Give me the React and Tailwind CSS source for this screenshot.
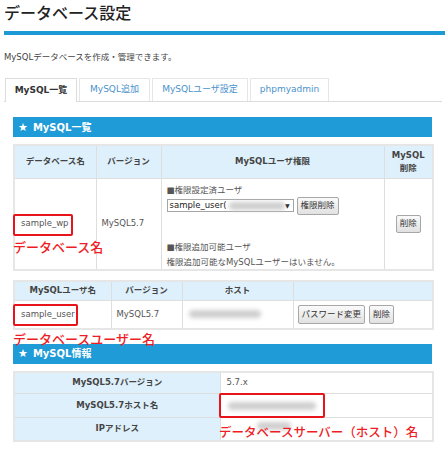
const JP = "font-['Noto_Sans_CJK_JP',sans-serif]";

function Blur({ w, className = "" }) {
  return <div className={`h-[8px] rounded-full bg-[#cfcfcf] blur-[2px] ${className}`} style={{ width: w }} />;
}

function Btn({ children, className = "" }) {
  return (
    <div
      className={`flex h-[18px] items-center rounded-[2px] border border-[#a7a7a7] bg-gradient-to-b from-[#fafafa] to-[#e1e1e1] px-[3px] text-[8.5px] leading-none text-[#333] ${className}`}
    >
      {children}
    </div>
  );
}

function SectionHead({ children }) {
  return (
    <div className="flex h-[20px] items-center gap-[5px] bg-[#1f9bd7] pl-[5px] text-[10px] font-bold text-white">
      <span className="text-[11px] leading-none">★</span>
      <span>{children}</span>
    </div>
  );
}

const th = "border border-[#dedede] bg-[#def0fb] text-center align-middle font-bold text-[8.5px] text-[#444] leading-[13px]";
const td = "border border-[#dedede] bg-white align-middle text-[8.5px] text-[#555] leading-[13px]";

export default function App() {
  return (
    <div className="relative h-[451px] w-[445px] overflow-hidden bg-white font-['DejaVu_Sans','Noto_Sans_CJK_JP',sans-serif] text-[#555]">
      <div className="pl-[4px]">
        <h1 className={`h-[24px] text-[16px] font-medium leading-[24px] text-[#222] ${JP}`}>データベース設定</h1>
        <div className="mt-[7px] h-[4px] bg-[#1d9ad6]" />
        <p className="mt-[15px] h-[14px] text-[8.5px] leading-[14px] text-[#444]">MySQLデータベースを作成・管理できます。</p>
        <div className="mr-[3px] mt-[14px] flex h-[24px] items-end gap-[2px] border-b border-[#dcdcdc] pl-[1px]">
          <div className="-mb-px flex h-[24px] w-[72px] items-center justify-center border border-b-0 border-[#dcdcdc] bg-white text-[9px] font-bold text-[#333]">
            MySQL一覧
          </div>
          <div className="flex h-[23px] w-[71px] items-center justify-center border border-b-0 border-[#e6e6e6] bg-white text-[9px] text-[#4a92cc]">
            MySQL追加
          </div>
          <div className="flex h-[23px] w-[96px] items-center justify-center border border-b-0 border-[#e6e6e6] bg-white text-[9px] text-[#4a92cc]">
            MySQLユーザ設定
          </div>
          <div className="flex h-[23px] w-[79px] items-center justify-center border border-b-0 border-[#e6e6e6] bg-white text-[9px] text-[#4a92cc]">
            phpmyadmin
          </div>
        </div>
      </div>

      <div className="mx-[13px] mt-[15px] w-[419px]">
        <SectionHead>MySQL一覧</SectionHead>

        <table className="mt-[7px] w-[419px] table-fixed border-collapse border-2 border-[#e6e6e6]">
          <colgroup>
            <col className="w-[82px]" />
            <col className="w-[65px]" />
            <col className="w-[223px]" />
            <col className="w-[49px]" />
          </colgroup>
          <tbody>
            <tr className="h-[33px]">
              <th className={th}>データベース名</th>
              <th className={th}>バージョン</th>
              <th className={th}>MySQLユーザ権限</th>
              <th className={th}>
                MySQL
                <br />
                削除
              </th>
            </tr>
            <tr className="h-[91px]">
              <td className={`${td} pl-[6px]`}>sample_wp</td>
              <td className={`${td} pl-[5px]`}>MySQL5.7</td>
              <td className={`${td} pl-[5px] pt-[5px] align-top`}>
                <div className="h-[13px]">■権限設定済ユーザ</div>
                <div className="flex h-[18px] items-center gap-[3px]">
                  <div className="flex h-[13px] w-[127px] items-center border border-[#a5a5a5] bg-white pl-[2px] pr-[3px] text-[8.5px] text-[#222]">
                    <span>sample_user(</span>
                    <Blur w={60} className="ml-[2px]" />
                    <span className="ml-auto text-[6px]">▼</span>
                  </div>
                  <Btn>権限削除</Btn>
                </div>
                <div className="mt-[26px] h-[13px]">■権限追加可能ユーザ</div>
                <div className="mt-[2px] h-[13px]">権限追加可能なMySQLユーザーはいません。</div>
              </td>
              <td className={`${td}`}>
                <div className="flex justify-center">
                  <Btn>削除</Btn>
                </div>
              </td>
            </tr>
          </tbody>
        </table>

        <table className="mt-[9px] w-[419px] table-fixed border-collapse border-2 border-[#e6e6e6]">
          <colgroup>
            <col className="w-[97px]" />
            <col className="w-[71px]" />
            <col className="w-[111px]" />
            <col className="w-[140px]" />
          </colgroup>
          <tbody>
            <tr className="h-[20px]">
              <th className={th}>MySQLユーザ名</th>
              <th className={th}>バージョン</th>
              <th className={th}>ホスト</th>
              <th className={th}></th>
            </tr>
            <tr className="h-[28px]">
              <td className={`${td} pl-[6px]`}>sample_user</td>
              <td className={`${td} pl-[5px]`}>MySQL5.7</td>
              <td className={`${td} pl-[6px]`}>
                <Blur w={72} />
              </td>
              <td className={`${td} pl-[4px]`}>
                <div className="flex items-center gap-[4px]">
                  <Btn className="h-[19px]">パスワード変更</Btn>
                  <Btn className="h-[19px]">削除</Btn>
                </div>
              </td>
            </tr>
          </tbody>
        </table>

        <div className="mt-[14px]">
          <SectionHead>MySQL情報</SectionHead>
        </div>

        <table className="mt-[7px] w-[419px] table-fixed border-collapse border-2 border-[#e6e6e6]">
          <colgroup>
            <col className="w-[206px]" />
            <col className="w-[213px]" />
          </colgroup>
          <tbody>
            <tr className="h-[22px]">
              <th className={th}>MySQL5.7バージョン</th>
              <td className={`${td} pl-[6px]`}>5.7.x</td>
            </tr>
            <tr className="h-[24px]">
              <th className={th}>MySQL5.7ホスト名</th>
              <td className={`${td} pl-[7px]`}>
                <Blur w={88} />
              </td>
            </tr>
            <tr className="h-[23px]">
              <th className={th}>IPアドレス</th>
              <td className={`${td} pl-[36px] align-top pt-[4px]`}>
                <Blur w={34} />
              </td>
            </tr>
          </tbody>
        </table>
      </div>

      {/* annotations */}
      <div className="absolute left-[13px] top-[214px] h-[22px] w-[60px] rounded-[2px] border-2 border-[#e8141b]" />
      <div className={`absolute left-[13px] top-[239px] text-[13px] font-medium leading-[16px] text-[#ee1c25] ${JP}`}>データベース名</div>

      <div className="absolute left-[13px] top-[304px] h-[22px] w-[65px] rounded-[2px] border-2 border-[#e8141b]" />
      <div className={`absolute left-[13px] top-[331px] text-[13px] font-medium leading-[16px] text-[#ee1c25] ${JP}`}>データベースユーザー名</div>

      <div className="absolute left-[219px] top-[393px] h-[25px] w-[106px] rounded-[2px] border-2 border-[#e8141b]" />
      <div className={`absolute left-[219px] top-[424px] text-[12.5px] font-medium leading-[16px] text-[#ee1c25] ${JP}`}>データベースサーバー（ホスト）名</div>
    </div>
  );
}
